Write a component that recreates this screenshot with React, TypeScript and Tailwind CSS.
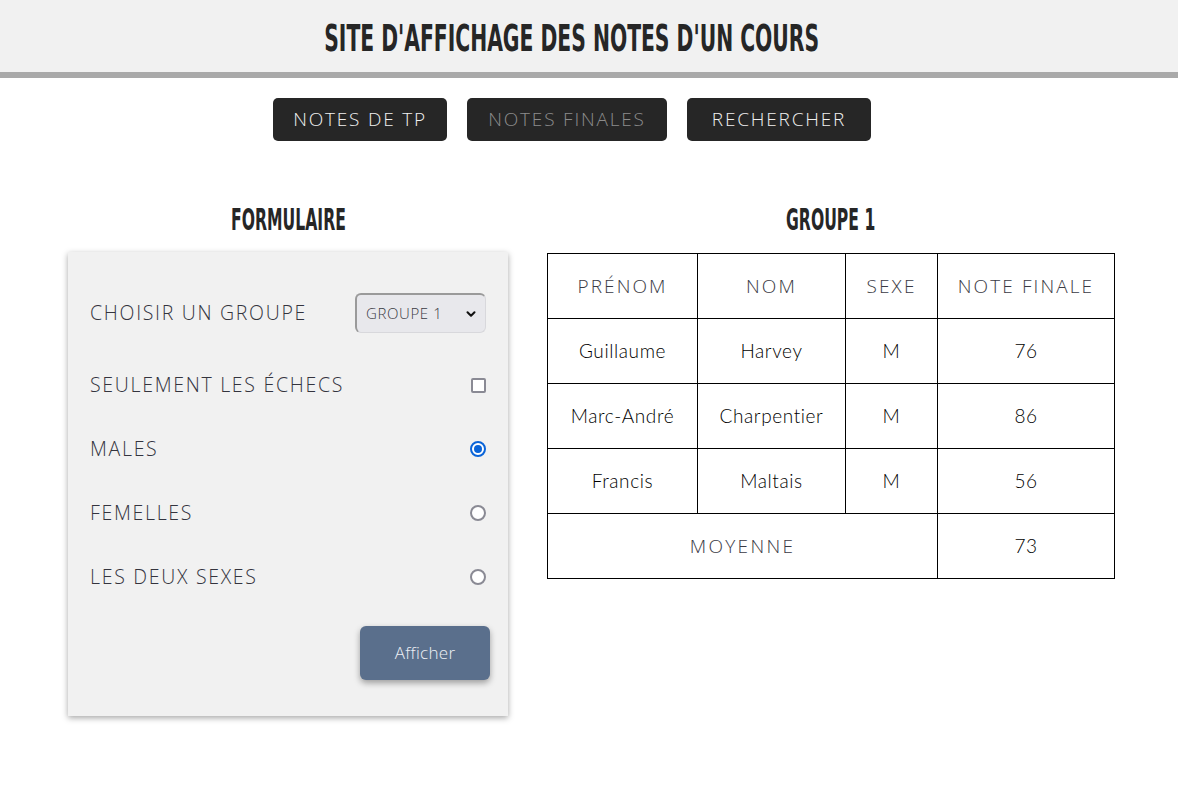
import React from "react"

const titleFont = "font-['DejaVu_Sans_Condensed','DejaVu_Sans',sans-serif]"
const bodyFont = "font-['Open_Sans','Liberation_Sans',sans-serif]"
const cellFont = "font-['Lato','Liberation_Sans',sans-serif]"

const ELEVES = [
  { prenom: "Guillaume", nom: "Harvey", sexe: "M", note: 76 },
  { prenom: "Marc-André", nom: "Charpentier", sexe: "M", note: 86 },
  { prenom: "Francis", nom: "Maltais", sexe: "M", note: 56 },
]

const Radio = ({ checked }: { checked?: boolean }) =>
  checked ? (
    <span className="flex h-4 w-4 items-center justify-center rounded-full border-2 border-[#0a64d8] bg-white">
      <span className="h-2 w-2 rounded-full bg-[#0a64d8]" />
    </span>
  ) : (
    <span className="h-4 w-4 rounded-full border-2 border-[#8a8a94] bg-white" />
  )

const Row = ({ label, children }: { label: string; children: React.ReactNode }) => (
  <div className="flex h-16 items-center justify-between">
    <span className="text-[19.5px] font-light tracking-[1.7px] text-[#34343e]">{label}</span>
    {children}
  </div>
)

const NavButton = ({ label, w, muted }: { label: string; w: string; muted?: boolean }) => (
  <button
    className={`h-[43px] rounded-[5px] bg-[#262626] text-[19px] font-light tracking-[1.8px] ${w} ${
      muted ? "text-[#8c8c8c]" : "text-[#f0f0f0]"
    }`}
  >
    {label}
  </button>
)

export default function App() {
  return (
    <div className={`min-h-[811px] bg-white ${bodyFont}`}>
      {/* entête */}
      <header className="flex h-[78px] items-start justify-center border-b-[6px] border-[#a9a9a9] bg-[#f1f1f1] pr-[34px]">
        <h1 className={`mt-[19px] inline-block scale-x-[0.61] whitespace-nowrap text-[37px] font-bold uppercase leading-[40px] text-[#262626] ${titleFont}`}>
          Site d'affichage des notes d'un cours
        </h1>
      </header>

      {/* navigation */}
      <nav className="mt-5 flex justify-center gap-5 pr-[34px]">
        <NavButton label="NOTES DE TP" w="w-[174px]" />
        <NavButton label="NOTES FINALES" w="w-[200px]" muted />
        <NavButton label="RECHERCHER" w="w-[184px]" />
      </nav>

      <main className="mt-[62px] flex gap-[39px] pl-[68px]">
        {/* formulaire */}
        <section className="w-[440px]">
          <div className="flex justify-center">
            <h2 className={`inline-block scale-x-[0.56] text-[31px] font-bold uppercase leading-[32px] text-[#262626] ${titleFont}`}>Formulaire</h2>
          </div>
          <div className="mt-[17px] bg-[#f1f1f1] px-[22px] pb-9 pt-[29px] shadow-[0_2px_6px_rgba(0,0,0,0.35)]">
            <Row label="CHOISIR UN GROUPE">
              <div className="flex h-10 w-[131px] items-center justify-between rounded-md border-b border-l-2 border-r border-t-2 border-[#9a9a9a] border-b-[#d8d8dc] border-r-[#d8d8dc] bg-[#e8e8ec] pl-[9px] pr-[7px]">
                <span className="text-[15px] font-light tracking-[0.6px] text-[#3a3a44]">GROUPE 1</span>
                <svg width="14" height="14" viewBox="0 0 24 24" fill="none" stroke="#111" strokeWidth="3.5" strokeLinecap="round" strokeLinejoin="round">
                  <path d="M6 9l6 6 6-6" />
                </svg>
              </div>
            </Row>
            <div className="mt-2">
              <Row label="SEULEMENT LES ÉCHECS">
                <span className="h-[15px] w-[15px] rounded-[2px] border-2 border-[#8a8a94] bg-white" />
              </Row>
              <Row label="MALES">
                <Radio checked />
              </Row>
              <Row label="FEMELLES">
                <Radio />
              </Row>
              <Row label="LES DEUX SEXES">
                <Radio />
              </Row>
            </div>
            <div className="mt-[17px] flex justify-end">
              <button className="-mr-1 h-[54px] w-[130px] rounded-[6px] bg-[#5a6f8c] text-[17px] font-light tracking-[0.3px] text-[#eef1f6] shadow-[0_3px_6px_rgba(0,0,0,0.35)]">
                Afficher
              </button>
            </div>
          </div>
        </section>

        {/* tableau */}
        <section className="w-[568px]">
          <div className="flex justify-center">
            <h2 className={`inline-block scale-x-[0.56] text-[31px] font-bold uppercase leading-[32px] text-[#262626] ${titleFont}`}>Groupe 1</h2>
          </div>
          <table className="mt-[18px] w-[568px] border-collapse text-center">
            <thead>
              <tr className="h-[65px] text-[19px] text-[#3a3a44]">
                <th className="w-[150px] border border-black font-light tracking-[2.1px]">PRÉNOM</th>
                <th className="w-[148px] border border-black font-light tracking-[2.1px]">NOM</th>
                <th className="w-[92px] border border-black font-light tracking-[2.1px]">SEXE</th>
                <th className="border border-black font-light tracking-[2.1px]">NOTE FINALE</th>
              </tr>
            </thead>
            <tbody className={`text-[19px] font-light tracking-[0.6px] text-black ${cellFont}`}>
              {ELEVES.map((e) => (
                <tr key={e.prenom} className="h-[65px]">
                  <td className="border border-black">{e.prenom}</td>
                  <td className="border border-black">{e.nom}</td>
                  <td className="border border-black">{e.sexe}</td>
                  <td className="border border-black">{e.note}</td>
                </tr>
              ))}
              <tr className="h-[65px]">
                <td colSpan={3} className={`border border-black font-light tracking-[2.3px] text-[#3a3a44] ${bodyFont}`}>MOYENNE</td>
                <td className="border border-black">73</td>
              </tr>
            </tbody>
          </table>
        </section>
      </main>
    </div>
  )
}
